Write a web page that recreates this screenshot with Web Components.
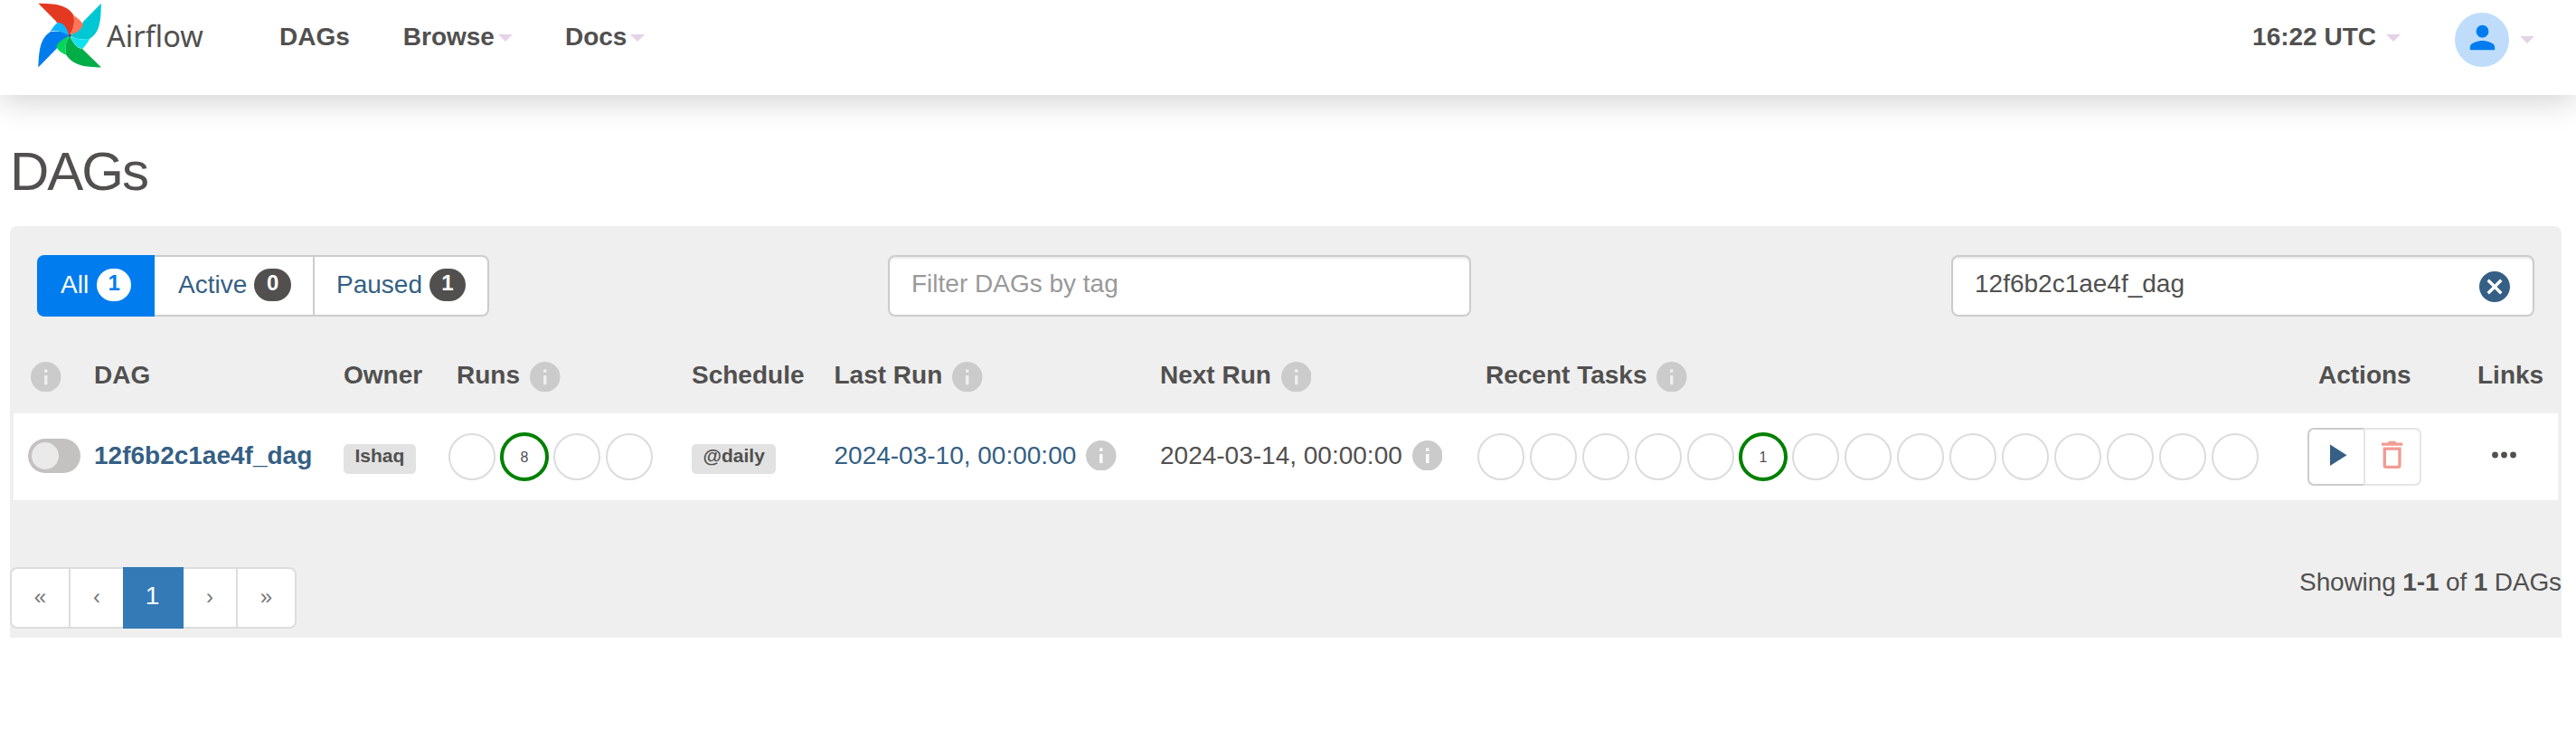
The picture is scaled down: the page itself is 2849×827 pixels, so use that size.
<!DOCTYPE html>
<html lang="en">
<head>
<meta charset="utf-8">
<title>DAGs - Airflow</title>
<style>
html,body{margin:0;padding:0;background:#fff}
body{font:28px/40px "Liberation Sans",Arial,sans-serif;color:#51504f;height:827px;overflow:hidden}
</style>
</head>
<body>
<airflow-app></airflow-app>
<script>
const define = (name, html) => customElements.define(name, class extends HTMLElement {
  constructor() {
    super();
    this.attachShadow({mode: 'open'});
  }
  connectedCallback() {
    if (this.shadowRoot.childNodes.length) return;
    const t = document.createElement('template');
    t.innerHTML = typeof html === 'function' ? html(this) : html;
    this.shadowRoot.append(t.content.cloneNode(true));
  }
});

define('af-caret', `<style>
:host{display:block;width:0;height:0;border:8px solid transparent;border-top-color:#e4d3e5;border-bottom:0;flex:none}
</style>`);

define('af-info', `<style>
:host{display:block;width:33.5px;height:33.5px;flex:none}svg{display:block;width:100%;height:100%}
</style><svg viewBox="2 2 20 20"><circle cx="12" cy="12" r="10" fill="#cbcbcb"/><path fill="var(--mark,#fff)" d="M11 7h2v2h-2zM11 11h2v6h-2z"/></svg>`);

define('af-logo', `<style>
:host{display:flex;align-items:flex-start}svg{display:block;flex:none}
span{font:400 32.5px/44px "Noto Sans",sans-serif;margin:15px 0 0 4px;width:112px;white-space:nowrap}
</style>
<svg width="72" height="74" viewBox="0 0 72 74">
<path fill="#017cee" d="M.3 71.500L34.500 36.500C30 32 22 30.500 14 32C2 39 1 54 .3 71.500Z"/>
<path fill="#0cb6ff" d="M14 31.500C17 27 20 23 24 21.800C29 23 32 29 34.800 36.500C27 31.500 19 29.800 14 31.500Z"/>
<path fill="#e43921" d="M.3 .8L35 35.500C39 31 41 23 39.500 14.300C33 2 18 1 .3 .8Z"/>
<path fill="#e43921" d="M20 21.500C27 21 33 28 35 36L39 20L20 10Z"/>
<path fill="#00c7d4" d="M69.900 .8L49.500 21.500C50 28 42 32.500 35 36C41 40 49 41.500 57 40C69 33 69.500 19 69.900 .8Z"/>
<path fill="#11e1ee" d="M57 39.800C55 45 51 49 49.500 51C42 50 38.500 43 35.200 36.500C42 40.500 49 41.500 57 39.800Z"/>
<path fill="#ff7557" d="M39.500 14.300C44 17 49 21 49.700 24.500C48 30 43 33 35 36C39.500 30 41 22 39.500 14.300Z"/>
<path fill="#0cb6ff" d="M14 31.500C17 27 20 23 22 21.800C29 22 32 29 34.800 36.500C27 31.500 19 29.800 14 31.500Z"/>
<path fill="#00ad46" d="M70 71.500L49 51C42 50 39 44 35 37C31 42 29.500 49 31 57.500C40 70 52 71 70 71.500Z"/>
<path fill="#04d659" d="M31 57.500C25 55.500 21 51 20.500 48.500C22 43 29 39.500 35 36.700C31 42 29.500 49 31 57.500Z"/>
<circle cx="35" cy="36.300" r="1.700" fill="#51504f"/>
</svg><span>Airflow</span>`);

define('af-nav', `<style>
:host{display:flex;height:105px;box-sizing:border-box;padding:3px 46px 0 42px;background:#fff;box-shadow:0 8px 32px rgba(0,0,0,.17);font-weight:700;position:relative;align-items:flex-start}
.item{display:flex;align-items:center;height:40px;margin-top:18px;white-space:nowrap}
.item af-caret{margin-left:4px;margin-top:2px}
.d{margin-left:79px}.b{margin-left:59px}.c{margin-left:58px}
.time{margin-left:auto}.item.time af-caret{margin-left:11px}
.avatar{flex:none;width:60px;height:60px;border-radius:50%;background:#bfddfb;margin:11px 12px 0 60px;display:flex;justify-content:center}
.avatar svg{margin-top:7px;width:41px;height:41px}
.last{margin-top:37px}
</style>
<af-logo></af-logo>
<div class="item d">DAGs</div><div class="item b">Browse<af-caret></af-caret></div><div class="item c">Docs<af-caret></af-caret></div>
<div class="item time">16:22 UTC<af-caret></af-caret></div>
<div class="avatar"><svg viewBox="0 0 24 24"><path fill="#017cee" d="M12 12c2.210 0 4-1.790 4-4s-1.790-4-4-4-4 1.790-4 4 1.790 4 4 4zm0 2c-2.670 0-8 1.340-8 4v2h16v-2c0-2.660-5.330-4-8-4z"/></svg></div>
<af-caret class="last"></af-caret>`);

define('af-filter', el => `<style>
:host{display:flex;box-sizing:border-box;height:68px;padding:13px 24px 0 26px;border:2px solid #ccc;border-left-width:0;background:#fff;color:#355f84}
:host([active]){background:#017cee;border-color:#017cee;color:#fff;border-radius:8px 0 0 8px;padding-left:26px;padding-right:24px}
:host([last]){border-radius:0 8px 8px 0;padding-left:24px}
span{line-height:35px}
b{margin-left:8px;width:41px;height:36px;border-radius:20px;background:#51504f;color:#fff;font-size:24px;line-height:32px;text-align:center}
:host([active]) b{background:#fff;color:#017cee;margin-left:9px}
</style><span><slot></slot></span><b>${el.getAttribute('count')}</b>`);

define('af-input', `<style>
:host{display:flex;box-sizing:border-box;width:645px;height:68px;border:2px solid #ccc;border-radius:8px;background:#fff;box-shadow:inset 0 2px 2px rgba(0,0,0,.075);padding:12px 25px 0 24px;justify-content:space-between;line-height:36px}
</style><slot></slot><slot name="end"></slot>`);

define('af-circles', el => {
  const n = +el.getAttribute('count'), at = +el.getAttribute('at');
  let s = '';
  for (let i = 0; i < n; i++) s += `<circle cx="${28 + 58 * i}" cy="28" r="25" fill="none" stroke="${i === at ? 'green' : '#dcdcdc'}" stroke-width="${i === at ? 4 : 2}"/>`;
  return `<style>:host{display:block}svg{display:block}</style><svg width="${n * 58}" height="56">${s}<text x="${28 + 58 * at}" y="33.700" text-anchor="middle" font-size="16" fill="#51504f">${el.getAttribute('value')}</text></svg>`;
});

define('af-label', `<style>
:host{display:block;width:max-content;height:33px;padding:0 12.5px;border-radius:5px;background:#e2e2e2;font-weight:700;font-size:21px;line-height:25px}
</style><slot></slot>`);

define('af-toggle', `<style>
:host{display:block;box-sizing:border-box;width:58px;height:38px;border-radius:19px;background:#c4c2c1;padding:4px}
i{display:block;width:30px;height:30px;border-radius:50%;background:#eaeaea}
</style><i></i>`);

define('af-actions', `<style>
:host{display:flex;width:126px;height:64px}
div{box-sizing:border-box;border:2px solid #ccc;height:64px}
.p{width:62px;border-radius:7px 0 0 7px;border-right:0}.t{width:64px;border-color:#e5e5e5;border-radius:0 7px 7px 0}
svg{display:block}
</style>
<div class="p"><svg width="60" height="60"><path fill="#355f84" d="M23 16.500V40L41.500 28.200Z"/></svg></div>
<div class="t"><svg width="60" height="60"><path fill="#f29c92" fill-rule="evenodd" d="M18 14.500h6.500l1.800-1.700h6.600l1.800 1.700h6.500v3.200H18zM19.600 19.500h20v20.200a3.300 3.300 0 0 1-3.300 3.300h-13.400a3.300 3.300 0 0 1-3.300-3.300zM23 22.700v17h13.300v-17z"/></svg></div>`);

define('af-table', `<style>
:host{display:block;margin:0 4px}
.r{display:grid;grid-template-columns:89px 276px 125px 260px 157.5px 360.5px 360px 921px 176px 89px;white-space:nowrap}
.h{height:107px;box-sizing:border-box;padding-top:45px;font-weight:700;line-height:40px}
.h>div{display:flex}.h af-info{margin:4.500px 0 0 11px;--mark:#efefef}
.h>div:first-child af-info{margin-left:19px}
.b{height:96px;background:#fff}
.b>div{display:flex;align-items:flex-start}
.t{line-height:40px;margin-top:27px}.link{color:#355f84}
.b af-info{margin:29.500px 0 0 11px}
af-label{margin-top:34px}af-toggle{margin:28px 0 0 16px}
af-circles{margin:20px 0 0 -11px}
af-actions{margin:16px 0 0 -12px}
.dots{margin:42px 0 0 15px}
</style>
<div class="r h"><div><af-info></af-info></div><div>DAG</div><div>Owner</div><div>Runs<af-info></af-info></div><div>Schedule</div><div>Last Run<af-info></af-info></div><div>Next Run<af-info></af-info></div><div>Recent Tasks<af-info></af-info></div><div>Actions</div><div>Links</div></div>
<div class="r b"><div><af-toggle></af-toggle></div><div><b class="t link">12f6b2c1ae4f_dag</b></div><div><af-label>Ishaq</af-label></div><div><af-circles count="4" at="1" value="8"></af-circles></div><div><af-label>@daily</af-label></div><div><span class="t link">2024-03-10, 00:00:00</span><af-info></af-info></div><div><span class="t">2024-03-14, 00:00:00</span><af-info></af-info></div><div><af-circles count="15" at="5" value="1"></af-circles></div><div><af-actions></af-actions></div><div><svg class="dots" width="30" height="8"><g fill="#51504f"><circle cx="4.500" cy="4" r="3.400"/><circle cx="14.500" cy="4" r="3.400"/><circle cx="24.500" cy="4" r="3.400"/></g></svg></div></div>`);

define('af-pager', `<style>
:host{display:flex;height:68px}
div{box-sizing:border-box;height:68px;border:2px solid #ddd;border-left:0;background:#fff;color:#777;text-align:center;line-height:40px;padding-top:10px}
div.f{border-left:2px solid #ddd;border-radius:8px 0 0 8px}div:last-child{border-radius:0 8px 8px 0}
div.a{background:#337ab7;border-color:#337ab7;color:#fff}
small{font-size:24px}
</style><div class="f" style="width:67px"><small>«</small></div><div style="width:58px;border-right:0"><small>‹</small></div><div class="a" style="width:67px">1</div><div style="width:60px"><small>›</small></div><div style="width:65px"><small>»</small></div>`);

define('airflow-app', `<style>
:host{display:block}
h1{margin:33px 0 0 11px;font-size:60px;line-height:104px;font-weight:400;height:112px;letter-spacing:-2px}
main{display:block;margin:0 16px 0 11px;height:455px;background:#efefef;border-radius:8px 8px 0 0}
.bar{display:flex;padding:32px 30px 0}
.group{display:flex;width:500px}
.tags{margin-left:441px}.search{margin-left:531px}
.foot{display:flex;justify-content:space-between;padding-top:74px}
.count{line-height:40px;margin-top:-3px;letter-spacing:-.13px}
.clear{margin-top:3.500px;display:block}
</style>
<af-nav></af-nav>
<h1>DAGs</h1>
<main>
<div class="bar"><div class="group"><af-filter active count="1" style="width:130px">All</af-filter><af-filter count="0" style="width:177px">Active</af-filter><af-filter last count="1" style="width:193px">Paused</af-filter></div>
<af-input class="tags"><span style="color:#999">Filter DAGs by tag</span></af-input>
<af-input class="search"><span>12f6b2c1ae4f_dag</span><svg slot="end" class="clear" width="34" height="34" viewBox="2 2 20 20"><path fill="#355f84" d="M12 2C6.470 2 2 6.470 2 12s4.470 10 10 10 10-4.470 10-10S17.530 2 12 2zm5 13.590L15.590 17 12 13.410 8.410 17 7 15.590 10.590 12 7 8.410 8.410 7 12 10.590 15.590 7 17 8.410 13.410 12 17 15.590z"/></svg></af-input></div>
<af-table></af-table>
<div class="foot"><af-pager></af-pager><div class="count">Showing <b>1-1</b> of <b>1</b> DAGs</div></div>
</main>`);
</script>
</body>
</html>
